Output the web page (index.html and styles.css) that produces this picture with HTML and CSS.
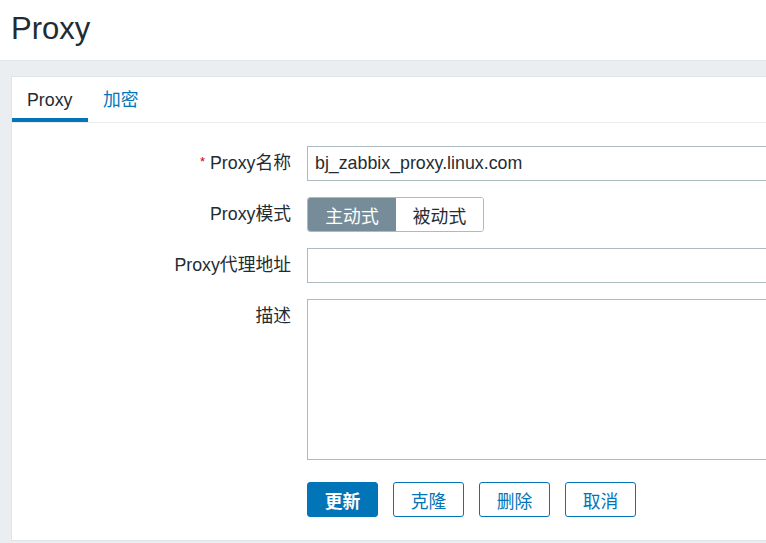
FILE: index.html
```html
<!DOCTYPE html>
<html lang="zh">
<head>
<meta charset="utf-8">
<title>Proxy</title>
<link rel="stylesheet" href="styles.css">
</head>
<body>
<header class="page-header">
  <h1 class="page-title">Proxy</h1>
</header>
<main class="content">
  <section class="card">
    <ul class="tabs">
      <li class="tab tab-active">Proxy</li>
      <li class="tab"><a class="tab-link" href="#">加密</a></li>
    </ul>
    <form class="form">
      <label class="form-label"><span class="req">*</span> Proxy名称</label>
      <div class="form-field"><input class="text-input" type="text" value="bj_zabbix_proxy.linux.com"></div>

      <label class="form-label">Proxy模式</label>
      <div class="form-field">
        <div class="segmented">
          <span class="seg seg-on">主动式</span>
          <span class="seg">被动式</span>
        </div>
      </div>

      <label class="form-label">Proxy代理地址</label>
      <div class="form-field"><input class="text-input" type="text" value=""></div>

      <label class="form-label">描述</label>
      <div class="form-field"><textarea class="text-area"></textarea></div>

      <div class="form-spacer"></div>
      <div class="form-actions">
        <button type="button" class="btn btn-primary">更新</button>
        <button type="button" class="btn btn-alt">克隆</button>
        <button type="button" class="btn btn-alt">删除</button>
        <button type="button" class="btn btn-alt">取消</button>
      </div>
    </form>
  </section>
</main>
</body>
</html>
```

FILE: styles.css
```css
html, body {
  margin: 0;
  padding: 0;
  overflow: hidden;
}
body {
  font-family: "Liberation Sans", Arial, "Noto Sans CJK SC", sans-serif;
  font-size: 17.8px;
  color: #1f2c33;
  background: #ebeef0;
  width: 766px;
  height: 543px;
}
.page-header {
  background: #ffffff;
  height: 61px;
  box-sizing: border-box;
  padding: 13px 0 0 11px;
  border-bottom: 1px solid #e3e7ea;
}
.page-title {
  margin: 0;
  font-size: 31px;
  font-weight: normal;
  line-height: 31px;
  color: #1f2c33;
}
.content {
  padding: 15px 0 0 11px;
}
.card {
  width: 1000px;
  background: #ffffff;
  border: 1px solid #dfe4e7;
  box-sizing: border-box;
  height: 465px;
}
.tabs {
  list-style: none;
  margin: 0;
  padding: 0;
  display: flex;
  border-bottom: 1px solid #ebeef0;
}
.tab {
  box-sizing: border-box;
  height: 45px;
  padding: 13px 15px 0 15px;
  line-height: 20px;
  border-bottom: 4px solid transparent;
}
.tab-active {
  border-bottom-color: #0275b8;
  width: 76px;
}
.tab-link {
  color: #0275b8;
  text-decoration: none;
}
.form {
  display: grid;
  grid-template-columns: 279px auto;
  column-gap: 16px;
  row-gap: 16px;
  padding-top: 23px;
}
.form-label {
  text-align: right;
  line-height: 35px;
  height: 35px;
  white-space: nowrap;
}
.req {
  color: #d40000;
  font-size: 13px;
  line-height: 0;
  vertical-align: 3px;
}
.form-field {
  display: flex;
}
.text-input {
  box-sizing: border-box;
  width: 670px;
  height: 35px;
  border: 1px solid #acbbc2;
  padding: 0 7px;
  font: inherit;
  color: #1f2c33;
  outline: none;
}
.text-area {
  box-sizing: border-box;
  width: 670px;
  height: 161px;
  border: 1px solid #acbbc2;
  padding: 6px 7px;
  font: inherit;
  resize: none;
  outline: none;
}
.segmented {
  display: flex;
  height: 35px;
  box-sizing: border-box;
  border: 1px solid #acbbc2;
  border-radius: 3px;
  overflow: hidden;
}
.seg {
  display: flex;
  align-items: center;
  justify-content: center;
  width: 87px;
  color: #1f2c33;
  background: #ffffff;
}
.seg-on {
  width: 88px;
  background: #768d99;
  color: #ffffff;
}
.form-actions {
  display: flex;
  gap: 15px;
  margin-top: 6px;
}
.btn {
  box-sizing: border-box;
  width: 71px;
  height: 35px;
  border-radius: 3px;
  font: inherit;
  padding: 0;
  cursor: pointer;
}
.btn-primary {
  background: #0275b8;
  border: 1px solid #0275b8;
  color: #ffffff;
  font-weight: bold;
}
.btn-alt {
  background: #ffffff;
  border: 1px solid #0275b8;
  color: #0275b8;
}
```
